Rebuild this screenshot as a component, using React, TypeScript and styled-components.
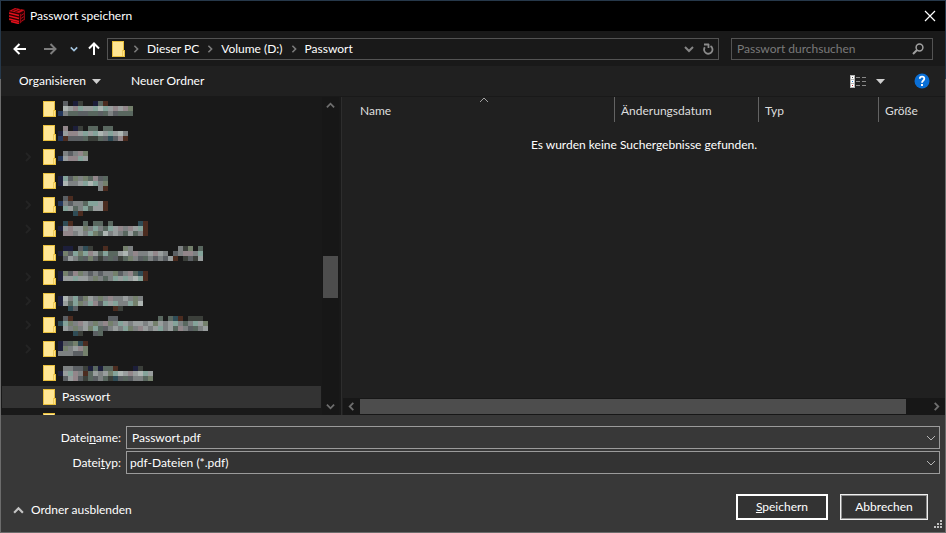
import React from "react";
import styled, { createGlobalStyle, css } from "styled-components";

const GlobalStyle = createGlobalStyle`
  * { box-sizing: border-box; }
  body { margin: 0; background: #383838; }
  body, button, input, select {
    font-family: Lato, "Noto Sans", sans-serif;
    font-size: 12px;
    line-height: 16px;
    color: #fff;
  }
`;

const Dialog = styled.main`
  display: flex;
  flex-direction: column;
  height: 100vh;
  padding: 1px;
  overflow: hidden;
  background: linear-gradient(#26384a 79px, #6c6c6c 79px);
`;

const plainButton = css`
  display: flex;
  align-items: center;
  justify-content: center;
  padding: 0;
  border: 0;
  background: none;
  white-space: nowrap;
`;

const TitleBar = styled.header`
  display: flex;
  align-items: center;
  flex: 0 0 30px;
  padding: 0 7px 0 8px;
  gap: 5px;
  background: #000;
`;

const Title = styled.h1`
  flex: 1;
  margin: 0;
  font-size: 12px;
  font-weight: 400;
`;

const IconButton = styled.button<{ $width: number }>`
  ${plainButton}
  flex: 0 0 ${(p) => p.$width}px;
  height: 20px;
`;

const NavBar = styled.nav`
  display: flex;
  align-items: center;
  flex: 0 0 35px;
  padding: 0 12px 0 5px;
  background: #191919;
`;

const NavButtons = styled.div`
  display: flex;
  flex: 0 0 101px;
`;

const AddressBar = styled.div`
  display: flex;
  align-items: center;
  flex: 1;
  height: 22px;
  padding-left: 4px;
  border: 1px solid #535353;
`;

const Crumbs = styled.ol`
  display: flex;
  flex: 1;
  margin: 0;
  padding: 0;
  list-style: none;
`;

const Crumb = styled.li`
  display: flex;
  align-items: center;

  a { color: #fff; text-decoration: none; }
`;

const CrumbArrow = styled.span`
  display: flex;
  justify-content: center;
  width: 22px;
`;

const SearchBox = styled.label`
  display: flex;
  align-items: center;
  flex: 0 0 202px;
  height: 22px;
  margin-left: 12px;
  padding: 0 8px 0 5px;
  border: 1px solid #535353;

  input {
    flex: 1;
    min-width: 0;
    padding: 0;
    border: 0;
    outline: 0;
    background: none;
  }
  input::placeholder { color: #7a7a7a; opacity: 1; }
`;

const Toolbar = styled.div`
  display: flex;
  align-items: center;
  flex: 0 0 31px;
  padding: 0 12px 0 18px;
  background: #202020;
  border-bottom: 1px solid #191919;
`;

const ToolButton = styled.button`
  ${plainButton}
  gap: 6px;
  margin-right: 30px;
`;

const ToolbarEnd = styled.div`
  display: flex;
  align-items: center;
  margin-left: auto;
`;

const HelpButton = styled(IconButton)`
  margin-left: 21px;
`;

const Body = styled.div`
  display: flex;
  flex: 1;
  min-height: 0;
  background: #202020;
`;

const TreePane = styled.div`
  display: flex;
  flex: 0 0 341px;
  padding-right: 2px;
  background: #191919;
  border-right: 1px solid #2d2d2d;
`;

const Tree = styled.ul`
  flex: 1;
  margin: 0;
  padding: 0 1px;
  overflow: hidden;
  list-style: none;
`;

const TreeRow = styled.li<{ $selected?: boolean }>`
  display: flex;
  align-items: center;
  height: 24px;
  padding-left: 21px;
  background: ${(p) => (p.$selected ? "#333" : "none")};
  border: solid #191919;
  border-width: 1px 0;
`;

const Expander = styled.span`
  display: flex;
  width: 20px;
`;

const TreeLabel = styled.span`
  margin-left: 6px;
`;

const Mosaic = styled.svg`
  display: block;
  flex: none;
  margin-left: 2px;
`;

const ScrollBar = styled.div<{ $horizontal?: boolean }>`
  display: flex;
  flex: 0 0 17px;
  flex-direction: ${(p) => (p.$horizontal ? "row" : "column")};
  background: #171717;
`;

const ScrollButton = styled.button`
  ${plainButton}
  flex: 0 0 17px;
`;

const ScrollTrack = styled.div<{ $horizontal?: boolean; $start: number; $thumb: number; $end: number }>`
  display: grid;
  flex: 1;
  ${(p) => {
    const tracks = `${p.$start}fr ${p.$thumb}fr ${p.$end}fr`;
    return p.$horizontal
      ? css`grid-template-columns: ${tracks}; padding: 1px 0;`
      : css`grid-template-rows: ${tracks}; padding: 0 1px;`;
  }}
`;

const ScrollThumb = styled.div<{ $horizontal?: boolean }>`
  background: #4d4d4d;
  ${(p) => (p.$horizontal ? "grid-column: 2;" : "grid-row: 2;")}
`;

const ListPane = styled.section`
  display: flex;
  flex: 1;
  flex-direction: column;
  min-width: 0;
  padding-left: 1px;
`;

const ListArea = styled.div`
  flex: 1;
  overflow: hidden;
`;

const FileTable = styled.table`
  width: 100%;
  table-layout: fixed;
  border-collapse: separate;
  border-spacing: 0;

  td {
    padding: 15px 0 0;
    text-align: center;
  }
`;

const HeadCell = styled.th<{ $width?: number; $first?: boolean }>`
  position: relative;
  width: ${(p) => (p.$width ? `${p.$width}px` : "auto")};
  height: 25px;
  padding: ${(p) => (p.$first ? "2px 0 0 17px" : "2px 0 0 6px")};
  border-right: ${(p) => (p.$width ? "1px solid #636363" : "0")};
  color: #dedede;
  font-weight: 400;
  text-align: left;
  white-space: nowrap;
`;

const SortMark = styled.span`
  position: absolute;
  top: -2px;
  left: 50%;
  display: flex;
`;

const Footer = styled.form`
  display: flex;
  flex: 0 0 117px;
  flex-direction: column;
  padding: 11px 5px 0 12px;
  background: #383838;
`;

const Fields = styled.div`
  display: grid;
  grid-template-columns: 108px 1fr;
  grid-auto-rows: 23px;
  align-items: center;
  column-gap: 5px;
  row-gap: 2px;

  label { text-align: right; }
`;

const Combo = styled.div`
  display: flex;
  align-items: center;
  height: 23px;
  background: #383838;
  border: 1px solid #9b9b9b;

  input {
    flex: 1;
    min-width: 0;
    padding: 0 5px;
    border: 0;
    outline: 0;
    background: none;
  }
`;

const TypeCombo = styled(Combo)`
  display: grid;
  align-items: stretch;
  background: #333;

  select, svg { grid-area: 1 / 1; }
  select {
    width: 100%;
    padding: 0 3px;
    border: 0;
    outline: 0;
    appearance: none;
    background: none;
  }
  svg {
    align-self: center;
    justify-self: end;
    margin-right: 3px;
    pointer-events: none;
  }
`;

const Actions = styled.div`
  display: flex;
  align-items: center;
  gap: 12px;
  margin-top: 20px;
  padding-right: 12px;
`;

const HideFolders = styled.button`
  ${plainButton}
  gap: 7px;
  margin: 6px auto 0 0;
`;

const DialogButton = styled.button<{ $primary?: boolean }>`
  width: ${(p) => (p.$primary ? 92 : 88)}px;
  height: 26px;
  padding: 0;
  background: #333;
  border: ${(p) => (p.$primary ? "2px solid #fff" : "1px solid #f0f0f0")};
  box-shadow: ${(p) => (p.$primary ? "none" : "inset 0 0 0 1px #8d8d8d")};
`;

const Grip = styled.svg`
  align-self: flex-end;
  margin-right: -2px;
`;

type Direction = "up" | "down" | "left" | "right";
const chevronPaths: Record<Direction, string> = {
  up: "M1 7 L5 3 L9 7",
  down: "M1 3 L5 7 L9 3",
  left: "M7 1 L3 5 L7 9",
  right: "M3 1 L7 5 L3 9",
};

function Chevron({ to, color = "#7b7b7b", size = 10, weight = 2 }: { to: Direction; color?: string; size?: number; weight?: number }) {
  return (
    <svg width={size} height={size} viewBox="0 0 10 10" fill="none" stroke={color} strokeWidth={weight} aria-hidden="true">
      <path d={chevronPaths[to]} />
    </svg>
  );
}

function FolderIcon() {
  return (
    <svg width="13" height="16" viewBox="0 0 13 16" aria-hidden="true">
      <path d="M0 0H12V9H13V16H0Z" fill="#e8bf3d" />
      <path d="M1 1H11V15H1Z" fill="#ffe694" />
      <path d="M11 10H12V15H11Z" fill="#ffe28a" />
      <path d="M10 9H11V15H10Z" fill="#efcb5a" />
    </svg>
  );
}

function Arrow({ rotate = 0, color }: { rotate?: number; color: string }) {
  return (
    <svg width="14" height="14" viewBox="0 0 14 14" fill="none" stroke={color} strokeWidth="2" aria-hidden="true">
      <g transform={`rotate(${rotate} 7 7)`}>
        <path d="M13 7H2M6.500 2L1.500 7L6.500 12" />
      </g>
    </svg>
  );
}

function Triangle() {
  return (
    <svg width="9" height="5" viewBox="0 0 9 5" aria-hidden="true">
      <path d="M0 0H9L4.500 5Z" fill="#cfcfcf" />
    </svg>
  );
}

function AppIcon() {
  return (
    <svg width="16" height="16" viewBox="0 0 16 16" aria-hidden="true">
      <path d="M0 3L6 0L16 2V12L11 16L0 13Z" fill="#2a0003" />
      <path d="M0 3L6 0L16 2L10 5Z" fill="#c80d17" />
      <path d="M3 3L8 1M6 4L12 1.500" stroke="#5c0006" />
      <path d="M0 5L10 7.500M0 8L10 10.500M0 11L10 13.500M2 13.500L10 15.500" stroke="#e5101b" strokeWidth="1.600" />
      <path d="M11.500 6V15M15.500 3V12" stroke="#8a0810" />
      <path d="M12 7.500L15 5.500M12 10.500L15 8.500M12 13.500L15 11.500" stroke="#a90a13" />
    </svg>
  );
}

const tints: Record<string, string> = {
  n: "#1c1e3a", b: "#23365a", k: "#3b3f3a", d: "#5b5f63", g: "#7d8182",
  l: "#989d9d", w: "#adb5b2", p: "#92868a", t: "#84a39a", e: "#59675f",
  o: "#74806c", r: "#4b2c20", m: "#2f4c56",
};

function BlurredName({ rows, top }: { rows: string[]; top: number }) {
  const columns = Math.max(...rows.map((row) => row.length));
  return (
    <Mosaic width={columns * 5} height={24} shapeRendering="crispEdges" aria-hidden="true">
      {rows.flatMap((row, y) =>
        [...row].map((cell, x) =>
          cell === "." ? null : (
            <rect key={`${x}-${y}`} x={x * 5} y={top + y * 5} width="5" height="5" fill={tints[cell]} />
          ),
        ),
      )}
    </Mosaic>
  );
}

const folders: { rows: string[]; top: number; open?: boolean }[] = [
  { top: 4, rows: [".d.nk..ner", ".wlptlltwtlplpo", "bgeeddeedegdeee"] },
  { top: 5, rows: [".p.nk.ee.ee", "nlppltltwltlwg", "brdddekkedmdpr"] },
  { top: 6, open: true, rows: [".gdgpo", "blpptl"] },
  { top: 7, rows: ["ntdogoepde", "nwggltwtgo", "........gr"] },
  { top: 3, open: true, rows: [".dr", "bgdggettlr", ".tlegtellr", "...mr"] },
  { top: 4, open: true, rows: [".mr..e.ee.e.....mr", "nlpllogtgetlpgpltr", ".ppglgtoewglgelegr"] },
  { top: 5, rows: [".nn.dmk..r...og.........gko.e", "nodtotpleteelwgpgglplg.dgppgt", ".dlgedodkdedkeogdegdgdlr.kdkl"] },
  { top: 6, open: true, rows: ["nodpogdgdggodgpemr", "nlltllgogegtltlwtr"] },
  { top: 7, open: true, rows: ["nwgtdolgogpgglgog", "nletogtpdtltggtow", "..md.......rk"] },
  { top: 3, open: true, rows: [".dr.......dd........e.emr.kkk.", "mtogplgogpogtlgllglolgltgegtlo", ".lgoglotedglgtogplgltglepgdegl", "...mk..de"] },
  { top: 4, open: true, rows: ["ndeomr", "noglpo", "gggddo"] },
  { top: 5, rows: [".ggddkneneer...nk..", "nltpgrelglotwlplwtl", ".dlpdkedgekmdedggeo"] },
];

export default function App() {
  return (
    <Dialog>
      <GlobalStyle />
      <TitleBar>
        <AppIcon />
        <Title>Passwort speichern</Title>
        <IconButton $width={16} type="button" aria-label="Schließen">
          <svg width="12" height="12" viewBox="0 0 12 12" stroke="#fff" strokeWidth="1.200" aria-hidden="true">
            <path d="M1 1L11 11M11 1L1 11" />
          </svg>
        </IconButton>
      </TitleBar>

      <NavBar aria-label="Pfad">
        <NavButtons>
          <IconButton $width={27} type="button" aria-label="Zurück"><Arrow color="#fff" /></IconButton>
          <IconButton $width={33} type="button" aria-label="Vorwärts"><Arrow rotate={180} color="#7d7d7d" /></IconButton>
          <IconButton $width={15} type="button" aria-label="Verlauf"><Chevron to="down" color="#a3c4de" size={8} /></IconButton>
          <IconButton $width={26} type="button" aria-label="Nach oben"><Arrow rotate={90} color="#fff" /></IconButton>
        </NavButtons>
        <AddressBar>
          <FolderIcon />
          <Crumbs>
            {["Dieser PC", "Volume (D:)", "Passwort"].map((name) => (
              <Crumb key={name}>
                <CrumbArrow><Chevron to="right" size={8} /></CrumbArrow>
                <a href="#ordner">{name}</a>
              </Crumb>
            ))}
          </Crumbs>
          <IconButton $width={19} type="button" aria-label="Vorherige Orte"><Chevron to="down" color="#858585" /></IconButton>
          <IconButton $width={20} type="button" aria-label="Aktualisieren">
            <svg width="11" height="12" viewBox="0 0 11 12" fill="none" stroke="#8c8c8c" strokeWidth="1.800" aria-hidden="true">
              <path d="M1.800 4.200A4.200 4.200 0 1 0 7.500 3M5.500 5V1M6 1.500H1" />
            </svg>
          </IconButton>
        </AddressBar>
        <SearchBox>
          <input type="text" placeholder="Passwort durchsuchen" aria-label="Passwort durchsuchen" />
          <svg width="12" height="12" viewBox="0 0 12 12" fill="none" stroke="#a0a0a0" aria-hidden="true">
            <circle cx="7.500" cy="4.500" r="3.400" strokeWidth="1.500" />
            <path d="M5 7L1 11" strokeWidth="2" />
          </svg>
        </SearchBox>
      </NavBar>

      <Toolbar>
        <ToolButton type="button">Organisieren<Triangle /></ToolButton>
        <ToolButton type="button">Neuer Ordner</ToolButton>
        <ToolbarEnd>
          <IconButton $width={24} type="button" aria-label="Ansicht">
            <svg width="16" height="13" viewBox="0 0 16 13" shapeRendering="crispEdges" aria-hidden="true">
              <path d="M0 0H5V13H0Z" fill="#b4b4b4" />
              <path d="M1 1H4V4H1ZM1 5H4V8H1ZM1 9H4V12H1Z" fill="#fff" />
              <path d="M2 2H3V3H2Z" fill="#555" />
              <path d="M2 6H3V7H2Z" fill="#2a7ad0" />
              <path d="M2 10H3V11H2Z" fill="#c0282d" />
              <path d="M6 2H10V3H6ZM12 2H16V3H12ZM6 6H10V7H6ZM12 6H16V7H12ZM6 10H10V11H6ZM12 10H16V11H12Z" fill="#8a8a8a" />
            </svg>
          </IconButton>
          <IconButton $width={20} type="button" aria-label="Weitere Optionen"><Triangle /></IconButton>
          <HelpButton $width={22} type="button" aria-label="Hilfe">
            <svg width="16" height="16" viewBox="0 0 16 16" fill="none" aria-hidden="true">
              <circle cx="8" cy="8" r="7.500" fill="#0a6fd6" />
              <path d="M5.800 5.800C5.800 2.900 10.300 3 10.300 5.700C10.300 7.500 8 7.500 8 9.800" stroke="#fff" strokeWidth="1.800" />
              <path d="M7 11H9V13H7Z" fill="#fff" />
            </svg>
          </HelpButton>
        </ToolbarEnd>
      </Toolbar>

      <Body>
        <TreePane>
          <Tree>
            {folders.map((folder, index) => (
              <TreeRow key={index}>
                <Expander>{folder.open && <Chevron to="right" color="#242424" />}</Expander>
                <FolderIcon />
                <BlurredName rows={folder.rows} top={folder.top} />
              </TreeRow>
            ))}
            <TreeRow $selected>
              <Expander />
              <FolderIcon />
              <TreeLabel>Passwort</TreeLabel>
            </TreeRow>
            <TreeRow>
              <Expander />
              <FolderIcon />
            </TreeRow>
          </Tree>
          <ScrollBar>
            <ScrollButton type="button" aria-label="Nach oben blättern"><Chevron to="up" color="#6e6e6e" size={9} /></ScrollButton>
            <ScrollTrack $start={142} $thumb={42} $end={100}><ScrollThumb /></ScrollTrack>
            <ScrollButton type="button" aria-label="Nach unten blättern"><Chevron to="down" color="#6e6e6e" size={9} /></ScrollButton>
          </ScrollBar>
        </TreePane>

        <ListPane>
          <ListArea>
            <FileTable>
              <thead>
                <tr>
                  <HeadCell $width={272} $first>
                    Name
                    <SortMark><Chevron to="up" color="#a0a0a0" size={10} weight={1} /></SortMark>
                  </HeadCell>
                  <HeadCell $width={144}>Änderungsdatum</HeadCell>
                  <HeadCell $width={120}>Typ</HeadCell>
                  <HeadCell>Größe</HeadCell>
                </tr>
              </thead>
              <tbody>
                <tr><td colSpan={4}>Es wurden keine Suchergebnisse gefunden.</td></tr>
              </tbody>
            </FileTable>
          </ListArea>
          <ScrollBar $horizontal>
            <ScrollButton type="button" aria-label="Nach links blättern"><Chevron to="left" color="#6e6e6e" size={9} /></ScrollButton>
            <ScrollTrack $horizontal $start={0} $thumb={546} $end={22}><ScrollThumb $horizontal /></ScrollTrack>
            <ScrollButton type="button" aria-label="Nach rechts blättern"><Chevron to="right" color="#6e6e6e" size={9} /></ScrollButton>
          </ScrollBar>
        </ListPane>
      </Body>

      <Footer onSubmit={(event) => event.preventDefault()}>
        <Fields>
          <label htmlFor="file-name">Datei<u>n</u>ame:</label>
          <Combo>
            <input id="file-name" type="text" defaultValue="Passwort.pdf" />
            <IconButton $width={16} type="button" aria-label="Frühere Dateinamen"><Chevron to="down" color="#b5b5b5" weight={1} /></IconButton>
          </Combo>
          <label htmlFor="file-type">Datei<u>t</u>yp:</label>
          <TypeCombo>
            <select id="file-type">
              <option>pdf-Dateien (*.pdf)</option>
            </select>
            <Chevron to="down" color="#b5b5b5" weight={1} />
          </TypeCombo>
        </Fields>
        <Actions>
          <HideFolders type="button"><Chevron to="up" color="#c4c4c4" size={11} />Ordner ausblenden</HideFolders>
          <DialogButton $primary type="submit"><u>S</u>peichern</DialogButton>
          <DialogButton type="button">Abbrechen</DialogButton>
        </Actions>
        <Grip width="8" height="8" viewBox="0 0 8 8" shapeRendering="crispEdges" aria-hidden="true">
          <path d="M6 0H8V2H6ZM3 3H5V5H3ZM6 3H8V5H6ZM0 6H2V8H0ZM3 6H5V8H3ZM6 6H8V8H6Z" fill="#c0c0c0" />
        </Grip>
      </Footer>
    </Dialog>
  );
}
